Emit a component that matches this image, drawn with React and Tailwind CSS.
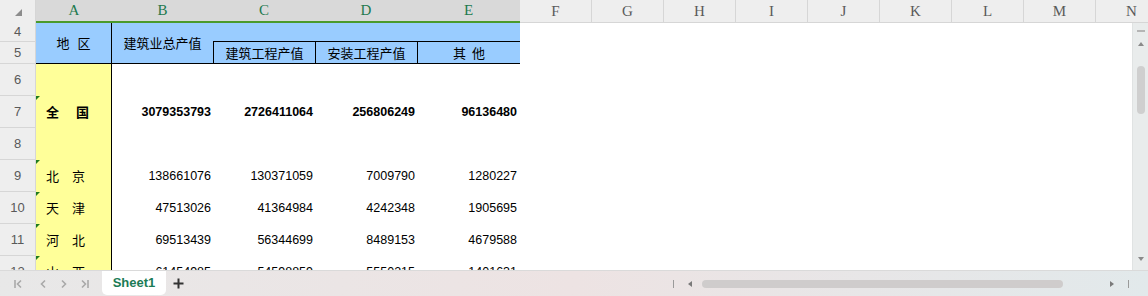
import React from 'react';

const CJK = "font-['Noto_Sans_CJK_SC','Noto_Sans',sans-serif]";
const NUM = "font-['Liberation_Sans',Arial,sans-serif]";

const extraCols = ['F', 'G', 'H', 'I', 'J', 'K', 'L', 'M', 'N'];

const rows = [
  { n: 6 },
  { n: 7, name: ['全', '国'], gap: 'ml-[17px]', bold: true, vals: ['3079353793', '2726411064', '256806249', '96136480'] },
  { n: 8 },
  { n: 9, name: ['北', '京'], gap: 'ml-[13px]', vals: ['138661076', '130371059', '7009790', '1280227'] },
  { n: 10, name: ['天', '津'], gap: 'ml-[13px]', vals: ['47513026', '41364984', '4242348', '1905695'] },
  { n: 11, name: ['河', '北'], gap: 'ml-[13px]', vals: ['69513439', '56344699', '8489153', '4679588'] },
  { n: 12, name: ['山', '西'], gap: 'ml-[13px]', vals: ['61454985', '54598859', '5550215', '1401631'] },
];

const RowHead = ({ n, h }) => (
  <div
    className={`w-[36px] shrink-0 ${h} flex items-center justify-center bg-[#eeeeee] border-b border-r border-[#d6d6d6] text-[13px] text-[#595959] ${NUM}`}
  >
    {n}
  </div>
);

const Chevron = ({ dir, bar }) => (
  <svg width="10" height="10" viewBox="0 0 10 10" fill="none" stroke="#a9a9a9" strokeWidth="1.6">
    {dir === 'left' ? <path d="M7 1.5 L3.5 5 L7 8.5" /> : <path d="M3 1.5 L6.5 5 L3 8.5" />}
    {bar === 'left' && <path d="M1 1 V9" />}
    {bar === 'right' && <path d="M9 1 V9" />}
  </svg>
);

const App = () => {
  return (
    <div className="w-[1148px] h-[296px] flex flex-col overflow-hidden bg-white select-none">
      {/* column letters */}
      <div className="flex h-[23px] shrink-0 overflow-hidden">
        <div className="w-[36px] shrink-0 bg-[#eeeeee] border-r border-[#d6d6d6] relative">
          <div className="absolute left-[15px] top-[9px] w-0 h-0 border-l-[7px] border-l-transparent border-b-[7px] border-b-[#8c8c8c]" />
        </div>
        <div className="flex bg-[#d9d9d9] border-b-2 border-[#4a9a2c] text-[15px] text-[#1d7a4e] font-['Liberation_Serif',serif]">
          <div className="w-[76px] flex items-center justify-center">A</div>
          <div className="w-[101px] flex items-center justify-center">B</div>
          <div className="w-[102px] flex items-center justify-center">C</div>
          <div className="w-[102px] flex items-center justify-center">D</div>
          <div className="w-[103px] flex items-center justify-center">E</div>
        </div>
        {extraCols.map((c) => (
          <div
            key={c}
            className="w-[72px] shrink-0 flex items-center justify-center bg-[#eeeeee] border-b border-r border-[#d6d6d6] text-[15px] text-[#5a5a5a] font-['Liberation_Serif',serif]"
          >
            {c}
          </div>
        ))}
      </div>

      {/* sheet body */}
      <div className="flex flex-1 min-h-0">
        <div className="flex-1 flex flex-col overflow-hidden">
          {/* header block rows 4-5 */}
          <div className={`flex shrink-0 text-[13px] text-black ${CJK}`}>
            <div className="flex flex-col">
              <RowHead n={4} h="h-[19px]" />
              <RowHead n={5} h="h-[22px]" />
            </div>
            <div className="w-[76px] h-[41px] bg-[#99ccff] border-r border-b border-black flex items-center justify-center">
              <span>地</span>
              <span className="ml-[8px]">区</span>
            </div>
            <div className="w-[101px] h-[41px] bg-[#99ccff] border-b border-black flex items-center justify-center pb-[1px]">
              建筑业总产值
            </div>
            <div className="w-[307px] flex flex-col bg-[#99ccff]">
              <div className="h-[19px] border-b border-black" />
              <div className="h-[22px] flex">
                <div className="w-[102px] border-l border-b border-black flex items-center justify-center">建筑工程产值</div>
                <div className="w-[102px] border-l border-b border-black flex items-center justify-center">安装工程产值</div>
                <div className="w-[103px] border-l border-b border-black flex items-center justify-center">
                  <span>其</span>
                  <span className="ml-[6px]">他</span>
                </div>
              </div>
            </div>
          </div>

          {/* data rows */}
          {rows.map((r) => (
            <div key={r.n} className="flex shrink-0 h-[32px]">
              <RowHead n={r.n} h="h-[32px]" />
              <div className={`w-[76px] relative bg-[#ffff99] border-r border-black flex items-center pl-[10px] text-[13px] text-black ${CJK} ${r.bold ? 'font-bold' : ''}`}>
                {r.name && (
                  <>
                    <div className="absolute left-0 top-0 w-0 h-0 border-t-[4px] border-t-[#1f7a1f] border-r-[4px] border-r-transparent" />
                    <span>{r.name[0]}</span>
                    <span className={r.gap}>{r.name[1]}</span>
                  </>
                )}
              </div>
              {['w-[101px] pr-[2px]', 'w-[102px] pr-[2px]', 'w-[102px] pr-[2px]', 'w-[103px] pr-[3px]'].map((cls, i) => (
                <div
                  key={i}
                  className={`${cls} flex items-center justify-end text-[12.5px] text-black ${NUM} ${r.bold ? 'font-bold' : ''}`}
                >
                  {r.vals ? r.vals[i] : ''}
                </div>
              ))}
            </div>
          ))}
        </div>

        {/* vertical scrollbar */}
        <div className="w-[16px] shrink-0 bg-[#e9ecec] border-l border-[#e0e3e3] flex flex-col items-center">
          <div className="mt-[7px] w-[8px] h-[2px] bg-[#b5b5b5]" />
          <div className="mt-[10px] w-0 h-0 border-l-[3px] border-r-[3px] border-b-[4px] border-l-transparent border-r-transparent border-b-[#8a8a8a]" />
          <div className="mt-[20px] w-[8px] h-[48px] rounded-full bg-[#cfcfcf]" />
          <div className="mt-auto mb-[9px] w-0 h-0 border-l-[3px] border-r-[3px] border-t-[4px] border-l-transparent border-r-transparent border-t-[#8a8a8a]" />
        </div>
      </div>

      {/* sheet tabs bar */}
      <div className="h-[26px] shrink-0 flex items-start border-t border-[#dadada] bg-linear-to-r from-[#e8e8e8] via-[#ede3e3] to-[#e2e9eb]">
        <div className="flex items-center h-[25px] pl-[14px]">
          <Chevron dir="left" bar="left" />
          <div className="ml-[14px]"><Chevron dir="left" /></div>
          <div className="ml-[11px]"><Chevron dir="right" /></div>
          <div className="ml-[10px]"><Chevron dir="right" bar="right" /></div>
        </div>
        <div className={`ml-[13px] w-[64px] h-[24px] bg-white rounded-b-[5px] flex items-center justify-center text-[13px] font-bold text-[#1b7b55] ${NUM}`}>
          Sheet1
        </div>
        <div className="ml-[7px] h-[25px] flex items-center">
          <svg width="11" height="11" viewBox="0 0 11 11" stroke="#333333" strokeWidth="2">
            <path d="M5.5 0.5 V10.5 M0.5 5.5 H10.5" />
          </svg>
        </div>
        <div className="ml-auto mr-[19px] h-[25px] flex items-center">
          <div className="w-[1px] h-[8px] bg-[#9a9a9a]" />
          <div className="ml-[14px] w-0 h-0 border-t-[3px] border-b-[3px] border-r-[4px] border-t-transparent border-b-transparent border-r-[#7a7a7a]" />
          <div className="ml-[10px] w-[361px] h-[8px] rounded-full bg-[#cfcccc]" />
          <div className="ml-[47px] w-0 h-0 border-t-[3px] border-b-[3px] border-l-[4px] border-t-transparent border-b-transparent border-l-[#7a7a7a]" />
          <div className="ml-[14px] w-[1px] h-[8px] bg-[#9a9a9a]" />
        </div>
      </div>
    </div>
  );
};

export default App;
